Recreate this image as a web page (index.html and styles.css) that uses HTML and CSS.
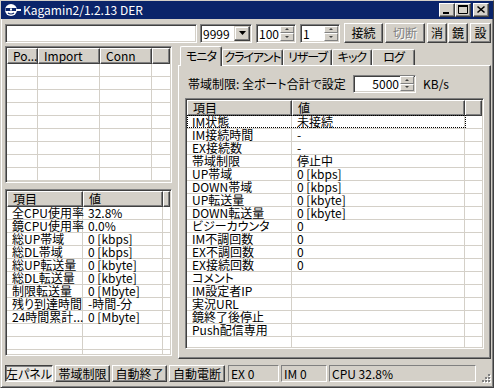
FILE: index.html
```html
<!DOCTYPE html>
<html>
<head>
<meta charset="utf-8">
<link rel="stylesheet" href="styles.css">
</head>
<body>
<div class="window">
  <div class="titlebar">
    <svg class="appicon" width="17" height="14" viewBox="0 0 17 14">
      <circle cx="7" cy="7" r="6" fill="#fff"/>
      <rect x="1.5" y="5" width="11" height="3" fill="#0a246a"/>
      <rect x="6" y="5.5" width="2" height="2" fill="#fff"/>
      <path d="M4 10 Q7 12 10 10" stroke="#0a246a" stroke-width="1.2" fill="none"/>
      <rect x="12" y="6" width="5" height="2" fill="#fff"/>
    </svg>
    <span class="title">Kagamin2/1.2.13 DER</span>
    <div class="tbtns">
      <span class="tbtn"><svg width="14" height="12" viewBox="0 0 14 12"><rect x="3" y="8" width="6" height="2" fill="#000"/></svg></span>
      <span class="tbtn"><svg width="14" height="12" viewBox="0 0 14 12"><path d="M2.5 1.5h9v8h-9z" stroke="#000" fill="none"/><rect x="2" y="1" width="10" height="2" fill="#000"/></svg></span>
      <span class="tbtn close"><svg width="14" height="12" viewBox="0 0 14 12"><path d="M3.5 2.5l7 6M10.5 2.5l-7 6" stroke="#000" stroke-width="1.6"/></svg></span>
    </div>
  </div>

  <div class="toolbar">
    <div class="field url"></div>
    <div class="field combo">
      <span class="ftext">9999</span>
      <span class="ddbtn"><svg width="7" height="4" viewBox="0 0 7 4"><path d="M0 0h7L3.5 4z" fill="#000"/></svg></span>
    </div>
    <div class="field spin">
      <span class="ftext">100</span>
      <span class="updown"><span class="ud"><i class="arr up"></i></span><span class="ud"><i class="arr down"></i></span></span>
    </div>
    <div class="field spin">
      <span class="ftext">1</span>
      <span class="updown"><span class="ud"><i class="arr up"></i></span><span class="ud"><i class="arr down"></i></span></span>
    </div>
    <button class="btn b-conn">接続</button>
    <button class="btn b-disc disabled">切断</button>
    <button class="btn b-sq">消</button>
    <button class="btn b-sq">鏡</button>
    <button class="btn b-sq b-last">設</button>
  </div>

  <div class="main">
    <div class="left">
      <div class="list list-top">
        <div class="lhead">
          <div class="hc" style="width:31px">Po...</div>
          <div class="hc" style="width:62px">Import</div>
          <div class="hc" style="width:52px">Conn</div>
          <div class="hc fill"></div>
        </div>
        <div class="lrow"><span class="c w31"></span><span class="c w62"></span><span class="c w52"></span><span class="c fill"></span></div>
        <div class="lrow"><span class="c w31"></span><span class="c w62"></span><span class="c w52"></span><span class="c fill"></span></div>
        <div class="lrow"><span class="c w31"></span><span class="c w62"></span><span class="c w52"></span><span class="c fill"></span></div>
        <div class="lrow"><span class="c w31"></span><span class="c w62"></span><span class="c w52"></span><span class="c fill"></span></div>
        <div class="lrow"><span class="c w31"></span><span class="c w62"></span><span class="c w52"></span><span class="c fill"></span></div>
        <div class="lrow"><span class="c w31"></span><span class="c w62"></span><span class="c w52"></span><span class="c fill"></span></div>
        <div class="lrow"><span class="c w31"></span><span class="c w62"></span><span class="c w52"></span><span class="c fill"></span></div>
        <div class="lrow"><span class="c w31"></span><span class="c w62"></span><span class="c w52"></span><span class="c fill"></span></div>
        <div class="lrow"><span class="c w31"></span><span class="c w62"></span><span class="c w52"></span><span class="c fill"></span></div>
        <div class="lrow"><span class="c w31"></span><span class="c w62"></span><span class="c w52"></span><span class="c fill"></span></div>
      </div>

      <div class="list list-info">
        <div class="lhead">
          <div class="hc" style="width:76px">項目</div>
          <div class="hc" style="width:80px">値</div>
          <div class="hc fill"></div>
        </div>
        <div class="lrow"><span class="c w76">全CPU使用率</span><span class="c w80">32.8%</span><span class="c fill"></span></div>
        <div class="lrow"><span class="c w76">鏡CPU使用率</span><span class="c w80">0.0%</span><span class="c fill"></span></div>
        <div class="lrow"><span class="c w76">総UP帯域</span><span class="c w80">0 [kbps]</span><span class="c fill"></span></div>
        <div class="lrow"><span class="c w76">総DL帯域</span><span class="c w80">0 [kbps]</span><span class="c fill"></span></div>
        <div class="lrow"><span class="c w76">総UP転送量</span><span class="c w80">0 [kbyte]</span><span class="c fill"></span></div>
        <div class="lrow"><span class="c w76">総DL転送量</span><span class="c w80">0 [kbyte]</span><span class="c fill"></span></div>
        <div class="lrow"><span class="c w76">制限転送量</span><span class="c w80">0 [Mbyte]</span><span class="c fill"></span></div>
        <div class="lrow"><span class="c w76">残り到達時間</span><span class="c w80">-時間-分</span><span class="c fill"></span></div>
        <div class="lrow"><span class="c w76">24時間累計...</span><span class="c w80">0 [Mbyte]</span><span class="c fill"></span></div>
        <div class="lrow"><span class="c w76"></span><span class="c w80"></span><span class="c fill"></span></div>
        <div class="lrow"><span class="c w76"></span><span class="c w80"></span><span class="c fill"></span></div>
        <div class="lrow"><span class="c w76"></span><span class="c w80"></span><span class="c fill"></span></div>
      </div>
    </div>

    <div class="right">
      <div class="tabs">
        <div class="tab sel" style="width:42px">モニタ</div>
        <div class="tab" style="width:61px">クライアント</div>
        <div class="tab" style="width:49px">リザーブ</div>
        <div class="tab" style="width:40px">キック</div>
        <div class="tab" style="width:43px">ログ</div>
      </div>
      <div class="panel">
        <div class="bwrow">
          <span class="bwlabel">帯域制限: 全ポート合計で設定</span>
          <div class="field spin bw">
            <span class="ftext">5000</span>
            <span class="updown"><span class="ud"><i class="arr up"></i></span><span class="ud"><i class="arr down"></i></span></span>
          </div>
          <span class="unit">KB/s</span>
        </div>
        <div class="list list-mon">
          <div class="lhead">
            <div class="hc" style="width:105px">項目</div>
            <div class="hc" style="width:173px">値</div>
            <div class="hc fill"></div>
          </div>
          <div class="lrow"><span class="c w105">IM状態</span><span class="c w173">未接続</span><span class="c fill"></span><span class="focus"></span></div>
          <div class="lrow"><span class="c w105">IM接続時間</span><span class="c w173">-</span><span class="c fill"></span></div>
          <div class="lrow"><span class="c w105">EX接続数</span><span class="c w173">-</span><span class="c fill"></span></div>
          <div class="lrow"><span class="c w105">帯域制限</span><span class="c w173">停止中</span><span class="c fill"></span></div>
          <div class="lrow"><span class="c w105">UP帯域</span><span class="c w173">0 [kbps]</span><span class="c fill"></span></div>
          <div class="lrow"><span class="c w105">DOWN帯域</span><span class="c w173">0 [kbps]</span><span class="c fill"></span></div>
          <div class="lrow"><span class="c w105">UP転送量</span><span class="c w173">0 [kbyte]</span><span class="c fill"></span></div>
          <div class="lrow"><span class="c w105">DOWN転送量</span><span class="c w173">0 [kbyte]</span><span class="c fill"></span></div>
          <div class="lrow"><span class="c w105">ビジーカウンタ</span><span class="c w173">0</span><span class="c fill"></span></div>
          <div class="lrow"><span class="c w105">IM不調回数</span><span class="c w173">0</span><span class="c fill"></span></div>
          <div class="lrow"><span class="c w105">EX不調回数</span><span class="c w173">0</span><span class="c fill"></span></div>
          <div class="lrow"><span class="c w105">EX接続回数</span><span class="c w173">0</span><span class="c fill"></span></div>
          <div class="lrow"><span class="c w105">コメント</span><span class="c w173"></span><span class="c fill"></span></div>
          <div class="lrow"><span class="c w105">IM設定者IP</span><span class="c w173"></span><span class="c fill"></span></div>
          <div class="lrow"><span class="c w105">実況URL</span><span class="c w173"></span><span class="c fill"></span></div>
          <div class="lrow"><span class="c w105">鏡終了後停止</span><span class="c w173"></span><span class="c fill"></span></div>
          <div class="lrow"><span class="c w105">Push配信専用</span><span class="c w173"></span><span class="c fill"></span></div>
          <div class="lrow"><span class="c w105"></span><span class="c w173"></span><span class="c fill"></span></div>
          <div class="lrow"><span class="c w105"></span><span class="c w173"></span><span class="c fill"></span></div>
        </div>
      </div>
    </div>
  </div>

  <div class="statusbar">
    <button class="sbtn pressed" style="width:48px">左パネル</button>
    <button class="sbtn" style="width:55px">帯域制限</button>
    <button class="sbtn" style="width:55px">自動終了</button>
    <button class="sbtn" style="width:56px">自動電断</button>
    <div class="spanel p-ex">EX 0</div>
    <div class="spanel" style="width:46px">IM 0</div>
    <div class="spanel" style="width:147px">CPU 32.8%</div>
    <svg class="grip" width="13" height="13" viewBox="0 0 13 13">
      <g fill="#fff"><rect x="11" y="3" width="2" height="2"/><rect x="8" y="6" width="2" height="2"/><rect x="11" y="6" width="2" height="2"/><rect x="5" y="9" width="2" height="2"/><rect x="8" y="9" width="2" height="2"/><rect x="11" y="9" width="2" height="2"/></g>
      <g fill="#808080"><rect x="10" y="2" width="2" height="2"/><rect x="7" y="5" width="2" height="2"/><rect x="10" y="5" width="2" height="2"/><rect x="4" y="8" width="2" height="2"/><rect x="7" y="8" width="2" height="2"/><rect x="10" y="8" width="2" height="2"/></g>
    </svg>
  </div>
</div>
</body>
</html>
```

FILE: styles.css
```css
* { box-sizing: border-box; }
html, body { margin: 0; padding: 0; }
body {
  background: #d4d0c8;
  font-family: "Noto Sans CJK JP", sans-serif;
  font-size: 12px;
  font-feature-settings: "palt";
  color: #000;
}

.window {
  width: 494px;
  height: 388px;
  background: #d4d0c8;
  border: 1px solid;
  border-color: #d4d0c8 #404040 #404040 #d4d0c8;
  box-shadow: inset 1px 1px #fff, inset -1px -1px #808080;
  display: flex;
  flex-direction: column;
  overflow: hidden;
}

/* title bar */
.titlebar {
  height: 18px;
  flex: none;
  background: #0a246a;
  color: #fff;
  display: flex;
  align-items: center;
  padding: 0 4px 0 3px;
}
.appicon { flex: none; margin-right: 2px; }
.title { font-size: 12px; line-height: 18px; white-space: nowrap; }
.tbtns { margin-left: auto; display: flex; }
.tbtn {
  width: 16px;
  height: 14px;
  background: #d4d0c8;
  border: 1px solid;
  border-color: #fff #404040 #404040 #fff;
  box-shadow: inset -1px -1px #808080, inset 1px 1px #d4d0c8;
  display: flex;
  align-items: center;
  justify-content: center;
}
.tbtn.close { margin-left: 2px; }

/* 3D helpers */
.field {
  background: #fff;
  border: 1px solid;
  border-color: #808080 #fff #fff #808080;
  box-shadow: inset 1px 1px #404040, inset -1px -1px #d4d0c8;
  padding: 1px;
  display: flex;
  align-items: center;
}
.btn, .sbtn {
  font-family: inherit;
  font-size: 12px;
  font-feature-settings: "palt";
  color: #000;
  background: #d4d0c8;
  border: 1px solid;
  border-color: #fff #404040 #404040 #fff;
  box-shadow: inset -1px -1px #808080, inset 1px 1px #d4d0c8;
  padding: 0;
  margin: 0;
  line-height: 14px;
  white-space: nowrap;
}

/* toolbar */
.toolbar {
  margin-top: 4px;
  height: 20px;
  flex: none;
  display: flex;
  align-items: center;
  padding-left: 4px;
}
.toolbar .field { height: 19px; }
.url { width: 192px; }
.combo { width: 52px; margin-left: 3px; }
.ftext { flex: 1; padding-left: 1px; line-height: 15px; white-space: nowrap; }
.ddbtn {
  width: 16px;
  height: 15px;
  background: #d4d0c8;
  border: 1px solid;
  border-color: #d4d0c8 #404040 #404040 #d4d0c8;
  box-shadow: inset -1px -1px #808080, inset 1px 1px #fff;
  display: flex;
  align-items: center;
  justify-content: center;
}
.spin { width: 40px; margin-left: 4px; }
.updown {
  width: 14px;
  height: 15px;
  display: flex;
  flex-direction: column;
}
.ud {
  flex: 1;
  background: #d4d0c8;
  border: 1px solid;
  border-color: #fff #808080 #808080 #fff;
  display: flex;
  align-items: center;
  justify-content: center;
}
.arr { display: block; width: 0; height: 0; border-left: 2px solid transparent; border-right: 2px solid transparent; }
.arr.up { border-bottom: 2px solid #404040; }
.arr.down { border-top: 2px solid #404040; }

.btn { height: 20px; }
.b-conn { width: 39px; margin-left: 4px; }
.b-disc { width: 40px; margin-left: 2px; }
.b-sq { width: 20px; margin-left: 1px; }
.b-disc + .b-sq { margin-left: 2px; }
.b-last { width: 21px; margin-left: 2px; }
.disabled { color: #808080; text-shadow: 1px 1px #fff; }

/* main */
.main {
  margin-top: 3px;
  height: 313px;
  flex: none;
  display: flex;
  padding-left: 4px;
}
.left {
  width: 167px;
  display: flex;
  flex-direction: column;
  gap: 6px;
}

/* list view */
.list {
  background: #fff;
  border: 1px solid;
  border-color: #808080 #fff #fff #808080;
  box-shadow: inset 1px 1px #404040, inset -1px -1px #d4d0c8;
  padding: 1px;
  overflow: hidden;
  display: flex;
  flex-direction: column;
}
.list-top { height: 137px; }
.list-info { height: 167px; }
.lhead { display: flex; height: 16px; flex: none; }
.hc {
  height: 16px;
  flex: none;
  background: #d4d0c8;
  border: 1px solid;
  border-color: #fff #404040 #404040 #fff;
  box-shadow: inset -1px -1px #808080;
  padding-left: 5px;
  line-height: 13px;
  white-space: nowrap;
  overflow: hidden;
}
.hc.fill, .c.fill { flex: 1; }
.lrow {
  display: flex;
  height: 13px;
  flex: none;
  border-bottom: 1px solid #d4d0c8;
  position: relative;
}
.c {
  flex: none;
  height: 12px;
  border-right: 1px solid #d4d0c8;
  padding-left: 5px;
  line-height: 12px;
  white-space: nowrap;
}
.c.fill { border-right: 0; }
.w31 { width: 31px; }
.w62 { width: 62px; }
.w52 { width: 52px; }
.w76 { width: 76px; }
.w80 { width: 80px; }
.w105 { width: 105px; }
.w173 { width: 173px; }
.focus {
  position: absolute;
  left: 0;
  top: -1px;
  width: 279px;
  height: 13px;
  border: 1px dotted #000;
}

/* tabs */
.right {
  width: 313px;
  margin-left: 6px;
  display: flex;
  flex-direction: column;
}
.tabs {
  height: 19px;
  flex: none;
  display: flex;
  align-items: flex-end;
  padding-left: 2px;
}
.tab {
  height: 16px;
  flex: none;
  text-align: center;
  line-height: 14px;
  letter-spacing: -1px;
  white-space: nowrap;
  background: #d4d0c8;
  border: 1px solid;
  border-bottom: 0;
  border-color: #fff #404040 #404040 #fff;
  box-shadow: inset -1px 0 #808080;
  border-radius: 2px 2px 0 0;
}
.tab.sel {
  height: 20px;
  margin-bottom: -1px;
  line-height: 17px;
  position: relative;
  z-index: 2;
}
.panel {
  flex: 1;
  background: #d4d0c8;
  border: 1px solid;
  border-color: #fff #404040 #404040 #fff;
  box-shadow: inset -1px -1px #808080;
  padding: 9px 6px 7px 6px;
  display: flex;
  flex-direction: column;
}
.bwrow {
  display: flex;
  align-items: center;
  height: 17px;
  flex: none;
}
.bwlabel { width: 168px; padding-left: 3px; white-space: nowrap; }
.spin.bw { width: 63px; height: 18px; margin-left: 0; }
.spin.bw .ftext { text-align: right; padding-right: 1px; }
.unit { margin-left: 7px; }
.list-mon { margin-top: 6px; height: 251px; flex: none; }

/* status bar */
.statusbar {
  margin-top: 2px;
  height: 25px;
  flex: none;
  display: flex;
  align-items: center;
  padding-left: 4px;
  gap: 2px;
}
.sbtn { height: 17px; flex: none; }
.sbtn.pressed {
  background: #e9e7e3;
  border-color: #404040 #fff #fff #404040;
  box-shadow: inset 1px 1px #808080;
}
.spanel {
  height: 17px;
  flex: none;
  border: 1px solid;
  border-color: #808080 #fff #fff #808080;
  padding-left: 2px;
  line-height: 15px;
  white-space: nowrap;
}
.p-ex { width: 51px; margin-left: 1px; }
.grip { margin-left: auto; margin-right: 2px; align-self: flex-end; margin-bottom: 1px; }
```
